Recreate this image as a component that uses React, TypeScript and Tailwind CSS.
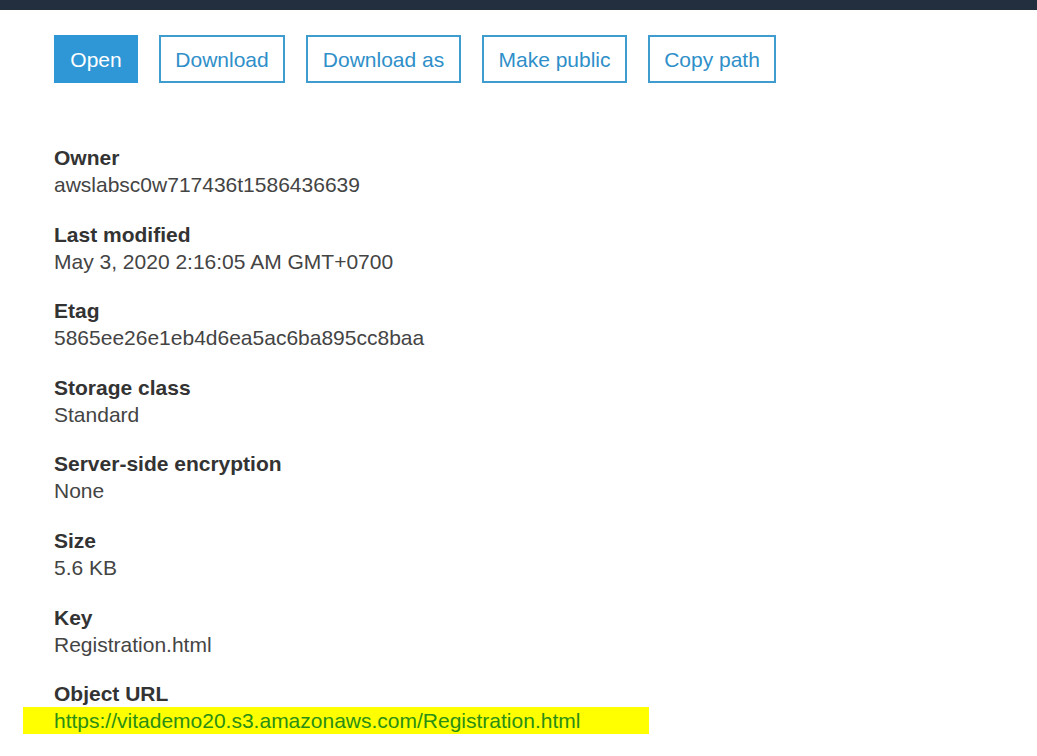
const buttons = [
  { label: 'Open', width: 'w-[84px]', primary: true },
  { label: 'Download', width: 'w-[126px]' },
  { label: 'Download as', width: 'w-[155px]' },
  { label: 'Make public', width: 'w-[145px]' },
  { label: 'Copy path', width: 'w-[128px]' },
];

const details = [
  { label: 'Owner', value: 'awslabsc0w717436t1586436639' },
  { label: 'Last modified', value: 'May 3, 2020 2:16:05 AM GMT+0700' },
  { label: 'Etag', value: '5865ee26e1eb4d6ea5ac6ba895cc8baa' },
  { label: 'Storage class', value: 'Standard' },
  { label: 'Server-side encryption', value: 'None' },
  { label: 'Size', value: '5.6 KB' },
  { label: 'Key', value: 'Registration.html' },
];

export default function App() {
  return (
    <div className="min-h-[756px] w-[1037px] bg-white font-['Liberation_Sans',Arial,sans-serif] overflow-hidden">
      <div className="h-[10px] bg-[#232f3e]" />

      <div className="pl-[54px] pt-[25px]">
        <div className="flex gap-[21px]">
          {buttons.map((b) =>
            b.primary ? (
              <button
                key={b.label}
                type="button"
                className={`${b.width} h-[48px] pt-[2px] bg-[#2f97d6] text-white text-[21px]`}
              >
                {b.label}
              </button>
            ) : (
              <button
                key={b.label}
                type="button"
                className={`${b.width} h-[48px] pt-[2px] border-2 border-[#3e9ccf] bg-white text-[#2f8fc9] text-[21px]`}
              >
                {b.label}
              </button>
            )
          )}
        </div>

        <div className="mt-[61px] flex flex-col gap-[22.6px]">
          {details.map((d) => (
            <div key={d.label} className="flex flex-col">
              <div className="text-[21px] leading-[27px] font-bold text-[#333]">{d.label}</div>
              <div className="text-[21px] leading-[27px] text-[#444]">{d.value}</div>
            </div>
          ))}

          <div className="flex flex-col">
            <div className="text-[21px] leading-[27px] font-bold text-[#333]">Object URL</div>
            <div className="-ml-[31px] w-[626px] bg-[#ffff00] pl-[31px] text-[21px] leading-[27px] text-[#2a8f14]">
              https://vitademo20.s3.amazonaws.com/Registration.html
            </div>
          </div>
        </div>
      </div>
    </div>
  );
}
